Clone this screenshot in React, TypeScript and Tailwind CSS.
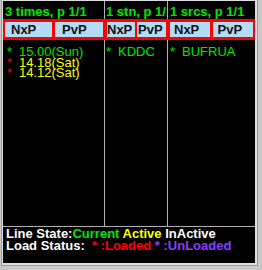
import React from "react";

const GREEN = "text-[#00e600]";

function Header({ text, pl, border }: { text: string; pl: string; border: boolean }) {
  return (
    <div
      className={`h-[18px] ${pl} pt-[4px] leading-[14px] text-[13px] font-bold ${GREEN} whitespace-nowrap overflow-x-clip ${border ? "border-r border-[#b0b0b0]" : ""}`}
    >
      {text}
    </div>
  );
}

function Buttons({ pl, gap }: { pl: [string, string]; gap: string }) {
  return (
    <div className={`bg-[#ff0000] px-[2px] py-[3px] flex ${gap}`}>
      <div className={`flex-1 min-w-0 bg-[#b2dcf7] ${pl[0]} text-[13px] font-bold leading-[15px] text-[#111] whitespace-nowrap overflow-hidden`}>
        NxP
      </div>
      <div className={`flex-1 min-w-0 bg-[#b2dcf7] ${pl[1]} text-[13px] font-bold leading-[15px] text-[#111] whitespace-nowrap overflow-hidden`}>
        PvP
      </div>
    </div>
  );
}

function Item({ star, color, text }: { star: string; color: string; text: string }) {
  return (
    <div className="flex whitespace-nowrap h-[10.5px]">
      <span className={`inline-block w-[12px] ${star}`}>*</span>
      <span className={color}>{text}</span>
    </div>
  );
}

export default function App() {
  return (
    <div
      className="w-[262px] h-[270px] bg-[#c8c8c8] pl-[1px]"
      style={{ fontFamily: '"Liberation Sans", Arial, sans-serif' }}
    >
      <div className="w-[257px] h-[266px] bg-[#dedede] border-l border-r border-b border-[#9c9c9c] pt-[1px] pl-[1px] pr-[2px] pb-[2px]">
        <div className="w-[252px] h-[262px] bg-black flex flex-col">
          <div className="flex-1 grid grid-cols-[102px_63px_87px] grid-rows-[18px_21px_1fr]">
            <Header text="3 times, p 1/1" pl="pl-[2px]" border />
            <Header text="1 stn, p 1/1" pl="pl-[1px]" border />
            <Header text="1 srcs, p 1/1" pl="pl-[2px]" border={false} />

            <Buttons pl={["pl-[6px]", "pl-[7px]"]} gap="gap-[3px]" />
            <Buttons pl={["pl-0", "pl-[1px]"]} gap="gap-[2px]" />
            <Buttons pl={["pl-[4px]", "pl-[5px]"]} gap="gap-[3px]" />

            <div className="border-r border-[#b0b0b0] pl-[4px] pt-[6px] text-[13px] leading-[12px]">
              <Item star={GREEN} color={GREEN} text="15.00(Sun)" />
              <Item star="text-[#ff0000]" color="text-[#ffff00]" text="14.18(Sat)" />
              <Item star="text-[#ff0000]" color="text-[#ffff00]" text="14.12(Sat)" />
            </div>
            <div className="border-r border-[#b0b0b0] pl-[1px] pt-[6px] text-[13px] leading-[12px]">
              <Item star={GREEN} color={GREEN} text="KDDC" />
            </div>
            <div className="pl-[2px] pt-[6px] text-[13px] leading-[12px]">
              <Item star={GREEN} color={GREEN} text="BUFRUA" />
            </div>
          </div>
          <div className="h-[37px] border-t border-[#b0b0b0] pl-[3px] pt-[1px] text-[13px] font-bold leading-[12px] whitespace-pre">
            <div>
              <span className="text-white">Line State:</span>
              <span className={GREEN}>Current</span>
              <span className="text-[#ffff00]"> Active</span>
              <span className="text-white"> InActive</span>
            </div>
            <div>
              <span className="text-white">Load Status:  </span>
              <span className="text-[#ff0000]">* :Loaded</span>
              <span className="text-[#8b3dff]"> * :UnLoaded</span>
            </div>
          </div>
        </div>
      </div>
    </div>
  );
}
